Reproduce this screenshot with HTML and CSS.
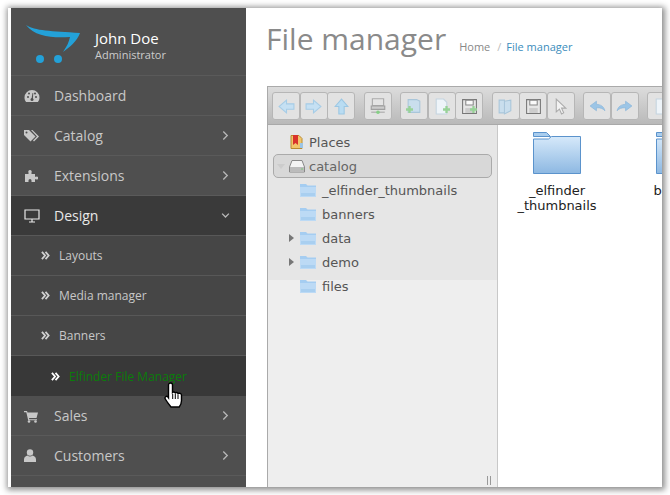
FILE: index.html
```html
<!DOCTYPE html>
<html lang="en">
<head>
    <meta charset="UTF-8">
    <title>File manager</title>
    <link rel="stylesheet" href="styles.css">
</head>
<body>
<svg class="defs" width="0" height="0">
    <defs>
        <symbol id="chev-right" viewBox="0 0 8 12"><path d="M1.500 1.500 6 6l-4.500 4.500" fill="none" stroke="currentColor" stroke-width="1.500"/></symbol>
        <symbol id="chev-down" viewBox="0 0 12 8"><path d="M1.500 1.500 6 6l4.500-4.500" fill="none" stroke="currentColor" stroke-width="1.800"/></symbol>
        <symbol id="double" viewBox="0 0 10 10"><path d="M1 1l3.500 4L1 9M5 1l3.500 4L5 9" fill="none" stroke="currentColor" stroke-width="2"/></symbol>
        <symbol id="tree-folder" viewBox="0 0 16 14"><path d="M0 1h6l1.500 1.500H16V14H0z" fill="#a5cdf1"/><path d="M0 4h16v10H0z" fill="#bcdaf5"/><path d="M1 10h14v3H1z" fill="#a9cff0"/></symbol>
        <symbol id="tool-folder" viewBox="0 0 16 16"><path d="M2 1.500h8l3 1.500v10.500H2z" fill="#c9deed" stroke="#a9c6da"/></symbol>
        <symbol id="tool-file" viewBox="0 0 16 16"><path d="M3 1h7l3 3v11H3z" fill="#eef4f9" stroke="#c4d4e0"/></symbol>
        <symbol id="tool-save" viewBox="0 0 16 16"><path d="M1.500 1.500h13v13h-13z" fill="#e6e6e6" stroke="#777"/><path d="M4.500 2h7v4.500h-7z" fill="#fafafa" stroke="#888"/><path d="M4 9.500h8V14H4z" fill="#ccc"/></symbol>
        <symbol id="plus" viewBox="0 0 9 9"><path d="M3 0h3v3h3v3H6v3H3V6H0V3h3z" fill="#98d298"/></symbol>
    </defs>
</svg>

<div class="window">
    <aside class="sidebar">
        <div class="profile">
            <svg class="logo" width="60" height="42" viewBox="0 0 60 42">
                <path d="M1 3C10 9 26 9 55 11 52 19 45 25 38 30 42 24 44 20 45 15 28 16 10 15 1 3z" fill="#23a1d8"/>
                <circle cx="15" cy="37" r="4" fill="#23a1d8"/>
                <circle cx="33" cy="37" r="4" fill="#23a1d8"/>
            </svg>
            <div class="profile-text">
                <div class="profile-name">John Doe</div>
                <div class="profile-role">Administrator</div>
            </div>
        </div>

        <nav class="menu">
            <a class="menu-item">
                <svg class="menu-icon" width="16" height="14" viewBox="0 0 16 14"><path d="M8 1a7.500 7.500 0 0 0-7.500 7.500c0 1.800.6 3.300 1.600 4.500h11.800c1-1.200 1.600-2.700 1.600-4.500A7.500 7.500 0 0 0 8 1z" fill="currentColor"/><g fill="#4f4f4f"><circle cx="4" cy="8" r="1"/><circle cx="5" cy="4.500" r="1"/><circle cx="11" cy="4.500" r="1"/><circle cx="12" cy="8" r="1"/><circle cx="8" cy="10.500" r="1.500"/><path d="M7.500 10l1-6 .8.200L8.800 10z"/></g></svg>
                <span class="menu-label">Dashboard</span>
            </a>
            <a class="menu-item">
                <svg class="menu-icon" width="16" height="14" viewBox="0 0 16 14"><path d="M0 1h5l6.500 6.500L6.500 12.500 0 6z" fill="currentColor"/><path d="M7 1h1.500l6.500 6.500-5 5-1-1 4-4z" fill="currentColor"/><circle cx="2.500" cy="3.500" r="1" fill="#4f4f4f"/></svg>
                <span class="menu-label">Catalog</span>
                <svg class="menu-arrow" width="7" height="11"><use href="#chev-right"/></svg>
            </a>
            <a class="menu-item">
                <svg class="menu-icon" width="14" height="14" viewBox="0 0 14 14"><path d="M1 5h3.500V3.500a1.700 1.700 0 1 1 3 0V5H11v2.800h1a1.500 1.500 0 1 1 0 2.400h-1V13H7.500v-1.500a1.500 1.500 0 1 0-3 0V13H1z" fill="currentColor"/></svg>
                <span class="menu-label">Extensions</span>
                <svg class="menu-arrow" width="7" height="11"><use href="#chev-right"/></svg>
            </a>
            <a class="menu-item is-open">
                <svg class="menu-icon" width="16" height="14" viewBox="0 0 16 14"><path d="M1 1h14v9H1zM5 13h6M8 10v3" fill="none" stroke="currentColor" stroke-width="1.200"/></svg>
                <span class="menu-label">Design</span>
                <svg class="menu-arrow is-down" width="9" height="7"><use href="#chev-down"/></svg>
            </a>
            <div class="submenu">
                <a class="sub-item"><svg class="sub-icon" width="9" height="9"><use href="#double"/></svg>Layouts</a>
                <a class="sub-item"><svg class="sub-icon" width="9" height="9"><use href="#double"/></svg>Media manager</a>
                <a class="sub-item"><svg class="sub-icon" width="9" height="9"><use href="#double"/></svg>Banners</a>
                <a class="sub-item is-active"><svg class="sub-icon" width="9" height="9"><use href="#double"/></svg>Elfinder File Manager</a>
            </div>
            <a class="menu-item">
                <svg class="menu-icon" width="15" height="14" viewBox="0 0 15 14"><path d="M0 2h3l.5 1.500H14L12.500 9H5l.3 1.200H13v1H4.200L2.300 3.200H0z" fill="currentColor"/><circle cx="5" cy="12.500" r="1.300" fill="currentColor"/><circle cx="11.500" cy="12.500" r="1.300" fill="currentColor"/></svg>
                <span class="menu-label">Sales</span>
                <svg class="menu-arrow" width="7" height="11"><use href="#chev-right"/></svg>
            </a>
            <a class="menu-item">
                <svg class="menu-icon" width="12" height="13" viewBox="0 0 12 13"><circle cx="6" cy="3.500" r="3.200" fill="currentColor"/><path d="M0 13v-2.500C0 8 2 6.800 3.500 6.500 4.200 7.200 5 7.500 6 7.500s1.800-.3 2.500-1C10 6.800 12 8 12 10.500V13z" fill="currentColor"/></svg>
                <span class="menu-label">Customers</span>
                <svg class="menu-arrow" width="7" height="11"><use href="#chev-right"/></svg>
            </a>
        </nav>

        <svg class="cursor" width="19" height="26" viewBox="0 0 19 26">
            <path d="M6.500 1C7.600 1 8.500 2 8.500 3v7.500c.7-.8 2.300-.6 2.800.4.700-.7 2.300-.5 2.700.6 1.200-.6 3.500-.1 3.500 1.800v5.500c0 2.500-1 4.500-2.300 6.200H7C5 22.500 3 20 1.300 17c-1-1.800 1-3.700 2.700-2l.5.700V3c0-1 .9-2 2-2z" fill="#fff" stroke="#000" stroke-width="1.400"/>
            <path d="M8.700 12v5M11.300 12v5M14 12.500V17" stroke="#000" stroke-width="1" fill="none"/>
        </svg>
    </aside>

    <main class="content">
        <header class="page-head">
            <h1>File manager</h1>
            <div class="crumbs"><span>Home</span><i>/</i><b>File manager</b></div>
        </header>

        <section class="elfinder">
            <div class="toolbar">
                <div class="tool-group">
                    <span class="tool"><svg width="17" height="17" viewBox="0 0 16 16"><path d="M8 2 1 8l7 6v-3.500h7v-5H8z" fill="#c5e0f3" stroke="#a6cce6"/></svg></span>
                    <span class="tool"><svg width="17" height="17" viewBox="0 0 16 16"><path d="M8 2l7 6-7 6v-3.500H1v-5h7z" fill="#c5e0f3" stroke="#a6cce6"/></svg></span>
                    <span class="tool"><svg width="17" height="17" viewBox="0 0 16 16"><path d="M2 8l6-7 6 7h-3.500v7h-5V8z" fill="#b9dcf2" stroke="#9cc7e3"/></svg></span>
                </div>
                <div class="tool-group">
                    <span class="tool"><svg width="18" height="18" viewBox="0 0 16 16"><path d="M3 1.500h10v6H3z" fill="#e4e4e4" stroke="#aaa"/><path d="M2 8h12v3H2z" fill="#ccc" stroke="#a0a0a0"/><path d="M2 13.500h12" stroke="#aaa"/><circle cx="8" cy="13.500" r="1.600" fill="#86cf86"/></svg></span>
                </div>
                <div class="tool-group">
                    <span class="tool"><svg width="17" height="17"><use href="#tool-folder"/></svg><svg class="plus plus-left" width="7" height="7"><use href="#plus"/></svg></span>
                    <span class="tool"><svg width="17" height="17"><use href="#tool-file"/></svg><svg class="plus" width="7" height="7"><use href="#plus"/></svg></span>
                    <span class="tool"><svg width="17" height="17"><use href="#tool-save"/></svg><svg class="plus" width="7" height="7"><use href="#plus"/></svg></span>
                </div>
                <div class="tool-group">
                    <span class="tool"><svg width="17" height="17" viewBox="0 0 16 16"><path d="M2 2h5v12H2zM7 3l6-1v10l-6 3z" fill="#c9deed" stroke="#a9c6da"/></svg></span>
                    <span class="tool"><svg width="17" height="17"><use href="#tool-save"/></svg></span>
                    <span class="tool"><svg width="17" height="17" viewBox="0 0 16 16"><path d="M4 1v12l3-2.500 2 4.500 2-1-2-4.500h4z" fill="#f2f2f2" stroke="#aaa"/></svg></span>
                </div>
                <div class="tool-group">
                    <span class="tool"><svg width="17" height="17" viewBox="0 0 16 16"><path d="M1 7.500 7 3v3c4 0 7 2 8 6-2-2-4-3-8-2.800V12z" fill="#9cc5e6" stroke="#86b4da" stroke-width=".6"/></svg></span>
                    <span class="tool"><svg width="17" height="17" viewBox="0 0 16 16"><path d="M15 7.500 9 3v3c-4 0-7 2-8 6 2-2 4-3 8-2.800V12z" fill="#9cc5e6" stroke="#86b4da" stroke-width=".6"/></svg></span>
                </div>
                <div class="tool-group">
                    <span class="tool"><svg width="17" height="17"><use href="#tool-file"/></svg></span>
                </div>
            </div>

            <div class="panes">
                <div class="tree">
                    <div class="tree-list">
                        <div class="tree-row places">
                            <svg class="tree-icon" width="16" height="16" viewBox="0 0 16 16"><path d="M2 1.500h8l3 3v10H2z" fill="#f2c66b" stroke="#b98a2e"/><path d="M4 1h5v10L6.500 9 4 11z" fill="#d9332b"/><path d="M11 9h3v5h-3z" fill="#9cc5e6"/></svg>
                            Places
                        </div>
                        <div class="tree-row catalog">
                            <span class="arrow-down"></span>
                            <svg class="tree-icon" width="16" height="13" viewBox="0 0 16 13"><path d="M3 .5h10L15.500 7v5H.5V7z" fill="#f3f3f3" stroke="#888"/><path d="M1 7h14v4.500H1z" fill="#bbb"/><path d="M12 9h2" stroke="#7c7"/></svg>
                            catalog
                        </div>
                        <div class="tree-row child"><span class="arrow-slot"></span><svg class="tree-icon" width="16" height="14"><use href="#tree-folder"/></svg>_elfinder_thumbnails</div>
                        <div class="tree-row child"><span class="arrow-slot"></span><svg class="tree-icon" width="16" height="14"><use href="#tree-folder"/></svg>banners</div>
                        <div class="tree-row child"><span class="arrow-right"></span><svg class="tree-icon" width="16" height="14"><use href="#tree-folder"/></svg>data</div>
                        <div class="tree-row child"><span class="arrow-right"></span><svg class="tree-icon" width="16" height="14"><use href="#tree-folder"/></svg>demo</div>
                        <div class="tree-row child"><span class="arrow-slot"></span><svg class="tree-icon" width="16" height="14"><use href="#tree-folder"/></svg>files</div>
                    </div>
                    <div class="tree-foot"><span class="grip"></span></div>
                </div>
                <div class="files">
                    <div class="file">
                        <svg width="48" height="42" viewBox="0 0 48 42">
                            <defs><linearGradient id="folder-fill" x1="0" y1="0" x2="0" y2="1"><stop offset="0" stop-color="#d6e9fa"/><stop offset="1" stop-color="#8db8e2"/></linearGradient></defs>
                            <path d="M.5 .5h13l4 4h-17z" fill="#a9cdee" stroke="#5b93cc"/>
                            <path d="M.5 7h15l3-2.500h29v37H.5z" fill="url(#folder-fill)" stroke="#5b93cc"/>
                        </svg>
                        <div class="file-name">_elfinder<br>_thumbnails</div>
                    </div>
                    <div class="file">
                        <svg width="48" height="42" viewBox="0 0 48 42">
                            <path d="M.5 .5h13l4 4h-17z" fill="#a9cdee" stroke="#5b93cc"/>
                            <path d="M.5 7h15l3-2.500h29v37H.5z" fill="url(#folder-fill)" stroke="#5b93cc"/>
                        </svg>
                        <div class="file-name">banners</div>
                    </div>
                </div>
            </div>
        </section>
    </main>
</div>
</body>
</html>
```

FILE: styles.css
```css
* {
    box-sizing: border-box;
}

html, body {
    margin: 0;
    height: 100%;
    overflow: hidden;
}

body {
    background-color: #fff;
    padding: 8px;
    font-family: "Open Sans", sans-serif;
}

.defs {
    position: absolute;
}

.window {
    display: flex;
    width: 654px;
    height: 479px;
    padding-left: 3px;
    background-color: #fff;
    overflow: hidden;
    box-shadow: 1px 1px 6px 2px rgba(0, 0, 0, 0.45);
}

.sidebar {
    position: relative;
    width: 235px;
    flex: none;
    background-color: #4f4f4f;
}

.profile {
    display: flex;
    align-items: center;
    gap: 10px;
    height: 68px;
    padding: 0 0 0 14px;
    border-bottom: 1px solid #5a5a5a;
}

.logo {
    margin-top: 2px;
}

.profile-text {
    padding-top: 8px;
}

.profile-name {
    color: #fff;
    font-size: 15px;
    line-height: 18px;
}

.profile-role {
    color: #ccc;
    font-size: 11px;
    line-height: 15px;
}

.menu-item {
    display: flex;
    align-items: center;
    height: 40px;
    padding: 0 17px 0 13px;
    color: #c8c8c8;
    font-size: 14px;
    border-bottom: 1px solid #5a5a5a;
}

.menu-icon {
    flex: none;
    color: #c8c8c8;
}

.menu-label {
    position: absolute;
    left: 43px;
}

.menu-arrow {
    margin-left: auto;
    color: #b8b8b8;
}

.menu-item.is-open {
    background-color: #3a3a3a;
    color: #e8e8e8;
    border-bottom-color: #585858;
}

.menu-item.is-open .menu-icon {
    color: #e8e8e8;
}

.menu-arrow.is-down {
    margin-right: -1px;
}

.submenu {
    background-color: #464646;
}

.sub-item {
    display: flex;
    align-items: center;
    gap: 9px;
    height: 40px;
    padding-left: 30px;
    color: #c8c8c8;
    font-size: 12px;
    border-bottom: 1px solid #585858;
}

.sub-icon {
    color: #d0d0d0;
}

.sub-item.is-active {
    padding-left: 40px;
    background-color: #383838;
    color: #0a7d0a;
    border-bottom: none;
}

.sub-item.is-active .sub-icon {
    color: #fff;
}

.cursor {
    position: absolute;
    left: 153px;
    top: 374px;
}

.content {
    flex: 1;
    min-width: 0;
    overflow: hidden;
    padding: 0 0 0 21px;
}

.page-head {
    display: flex;
    align-items: flex-start;
    height: 78px;
    padding-top: 9px;
}

h1 {
    margin: 0 0 0 -1px;
    color: #8a8a8a;
    font-size: 30px;
    font-weight: 400;
    line-height: 44px;
}

.crumbs {
    margin: 22px 0 0 13px;
    color: #888;
    font-size: 11px;
}

.crumbs i {
    margin: 0 5px 0 7px;
    color: #bbb;
    font-style: normal;
}

.crumbs b {
    color: #3c8dbc;
    font-weight: 400;
}

.elfinder {
    width: 560px;
    height: 402px;
    border: 1px solid #aaa;
    border-bottom: none;
    font-family: "DejaVu Sans", sans-serif;
}

.toolbar {
    display: flex;
    gap: 8.500px;
    height: 38px;
    padding: 5px 0 0 4px;
    background: linear-gradient(#dcdcdc, #b9b9b9);
    border-bottom: 1px solid #a9a9a9;
}

.tool-group {
    display: flex;
    height: 28px;
}

.tool {
    position: relative;
    display: flex;
    align-items: center;
    justify-content: center;
    width: 28px;
    background-color: #e2e2e2;
    border: 1px solid #b6b6b6;
    border-radius: 3px;
}

.tool + .tool {
    margin-left: -0.500px;
}

.plus {
    position: absolute;
    right: 5px;
    bottom: 6px;
}

.plus-left {
    right: auto;
    left: 5px;
}

.panes {
    display: flex;
    height: 363px;
}

.tree {
    display: flex;
    flex-direction: column;
    width: 230px;
    flex: none;
    background: linear-gradient(#e6e6e6 155px, #eee 155px);
    border-right: 1px solid #c8c8c8;
    color: #555;
    font-size: 13px;
}

.tree-list {
    padding: 5px 5px 0;
}

.tree-row {
    display: flex;
    align-items: center;
    gap: 6px;
    height: 24px;
    white-space: nowrap;
}

.places {
    padding-left: 16px;
    gap: 4px;
}

.catalog {
    padding-left: 3px;
    gap: 4px;
    background-color: #d8d8d8;
    border: 1px solid #aaa;
    border-radius: 5px;
    color: #666;
}

.child {
    padding-left: 16px;
}

.arrow-slot,
.arrow-right {
    width: 5px;
}

.arrow-right {
    height: 0;
    border-left: 5px solid #777;
    border-top: 4px solid transparent;
    border-bottom: 4px solid transparent;
}

.arrow-down {
    width: 0;
    height: 0;
    border-left: 4px solid transparent;
    border-right: 4px solid transparent;
    border-top: 5px solid #ccc;
}

.tree-foot {
    display: flex;
    justify-content: flex-end;
    align-items: flex-end;
    flex: 1;
    padding: 0 6px 3px 0;
}

.grip {
    width: 4px;
    height: 9px;
    border-left: 1px solid #999;
    border-right: 1px solid #999;
}

.files {
    display: flex;
    flex: 1;
    gap: 27px;
    padding: 7px 0 0 11px;
    background-color: #fff;
}

.file {
    width: 96px;
    text-align: center;
    color: #222;
    font-size: 13px;
    line-height: 15px;
}

.file svg {
    display: block;
    margin: 0 auto 9px;
}

.file-name {
    white-space: nowrap;
}
```
